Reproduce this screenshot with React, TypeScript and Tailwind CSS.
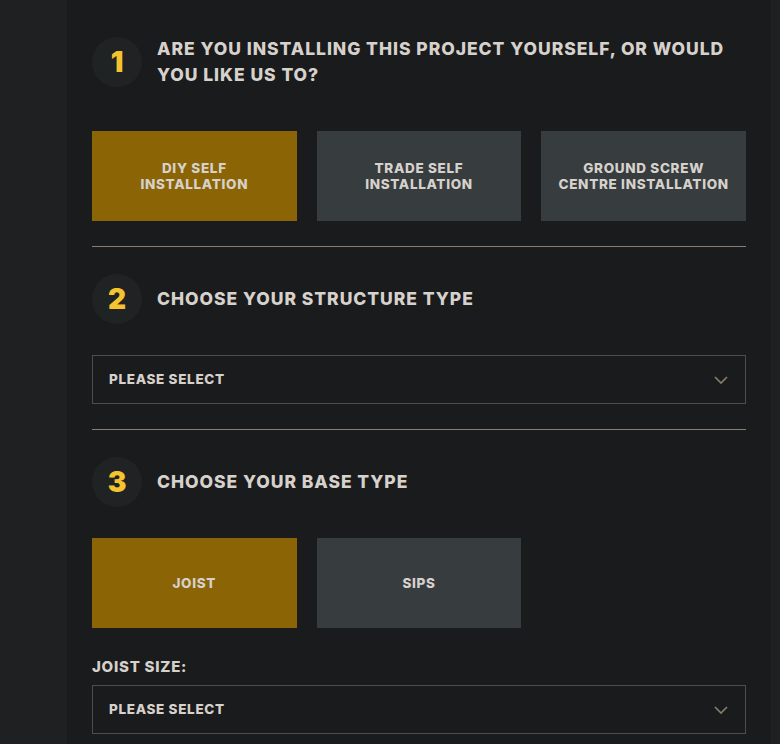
import { useState } from "react";

function StepHeader(props: { n: number; title: string }) {
    return (
        <div className="flex items-center gap-[15px]">
            <div className="w-[50px] h-[50px] shrink-0 rounded-full bg-[#202323] flex items-center justify-center text-[#f5c230] text-[28px] font-black">
                {props.n}
            </div>
            <h2 className="text-[17.5px] leading-[26px] font-extrabold tracking-[0.055em] text-[#d6d1cb] uppercase">
                {props.title}
            </h2>
        </div>
    );
}

function Choice(props: { label: string[]; active: boolean; onClick: () => void }) {
    return (
        <button
            onClick={props.onClick}
            className={
                "h-[90px] flex flex-col items-center justify-center text-[13.5px] leading-4 font-extrabold tracking-[0.05em] text-[#d6d1cb] uppercase " +
                (props.active ? "bg-[#8a6405]" : "bg-[#373c3f]")
            }
        >
            {props.label.map((l) => (
                <span key={l}>{l}</span>
            ))}
        </button>
    );
}

function Select() {
    return (
        <div className="h-[49px] border border-[#4b4d4e] flex items-center justify-between pl-4 pr-[17px]">
            <span className="text-[13.5px] font-extrabold tracking-[0.05em] text-[#d6d1cb]">PLEASE SELECT</span>
            <svg width="14" height="8" viewBox="0 0 14 8" fill="none">
                <path d="M1 1l6 6 6-6" stroke="#8a8070" strokeWidth="1.6" />
            </svg>
        </div>
    );
}

const App = () => {
    const [install, setInstall] = useState(0);
    const [base, setBase] = useState(0);

    const installs = [
        ["DIY SELF", "INSTALLATION"],
        ["TRADE SELF", "INSTALLATION"],
        ["GROUND SCREW", "CENTRE INSTALLATION"],
    ];

    return (
        <div className="min-h-screen flex bg-[#1f2021]" style={{ fontFamily: "Inter, 'Open Sans', sans-serif" }}>
            <div className="w-[67px] shrink-0" />
            <main className="w-[704px] bg-[#1a1b1d] pl-[25px] pr-[25px] pt-[36px] pb-4">
                {/* Step 1 */}
                <StepHeader n={1} title="Are you installing this project yourself, or would you like us to?" />
                <div className="grid grid-cols-3 gap-5 mt-[43px]">
                    {installs.map((l, i) => (
                        <Choice key={i} label={l} active={install === i} onClick={() => setInstall(i)} />
                    ))}
                </div>
                <div className="h-px bg-[#8a7c6e] mt-[25px] mb-[27px]" />

                {/* Step 2 */}
                <StepHeader n={2} title="Choose your structure type" />
                <div className="mt-[31px]">
                    <Select />
                </div>
                <div className="h-px bg-[#8a7c6e] mt-[25px] mb-[27px]" />

                {/* Step 3 */}
                <StepHeader n={3} title="Choose your base type" />
                <div className="grid grid-cols-3 gap-5 mt-[31px]">
                    <Choice label={["JOIST"]} active={base === 0} onClick={() => setBase(0)} />
                    <Choice label={["SIPS"]} active={base === 1} onClick={() => setBase(1)} />
                </div>
                <div className="mt-[30px] mb-[9px] text-[15px] leading-[18px] font-extrabold tracking-[0.05em] text-[#d6d1cb]">JOIST SIZE:</div>
                <Select />
            </main>
        </div>
    );
};

export default App;
